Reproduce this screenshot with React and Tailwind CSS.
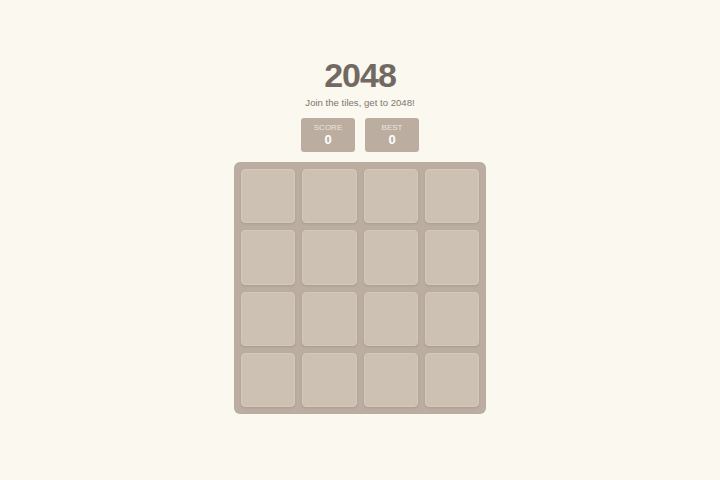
import { useState } from 'react'

function ScoreBox({ label, value }) {
  return (
    <div className="w-[54px] h-[34px] rounded-[3px] bg-[#bbada0] flex flex-col items-center justify-center">
      <div className="text-[8px] leading-[10px] text-[#eee4da] uppercase">{label}</div>
      <div className="text-[13px] leading-[14px] font-bold text-white">{value}</div>
    </div>
  )
}

export default function App() {
  const [score] = useState(0)
  const [best] = useState(0)
  const cells = []
  for (var i = 0; i < 16; i++) cells.push(i)

  return (
    <div
      className="min-h-[480px] w-full bg-[#faf8ef] flex flex-col items-center pt-[58px]"
      style={{ fontFamily: '"Liberation Sans", Arial, sans-serif' }}
    >
      <h1 className="text-[34px] leading-[34px] font-bold text-[#726a62] tracking-[-1px]">2048</h1>
      <p className="mt-[4px] text-[9.6px] leading-[14px] text-[#80776e]">Join the tiles, get to 2048!</p>

      <div className="mt-[8px] flex gap-[10px]">
        <ScoreBox label="Score" value={score} />
        <ScoreBox label="Best" value={best} />
      </div>

      <div className="mt-[10px] w-[252px] h-[252px] p-[7px] rounded-[6px] bg-[#bbada0] grid grid-cols-4 grid-rows-4 gap-[7px]">
        {cells.map(function (c) {
          return (
            <div
              key={c}
              className="rounded-[4px] bg-[#cdc1b4] border border-[#d4c9be] shadow-[0_1px_2px_rgba(119,110,101,0.25)]"
            />
          )
        })}
      </div>
    </div>
  )
}
